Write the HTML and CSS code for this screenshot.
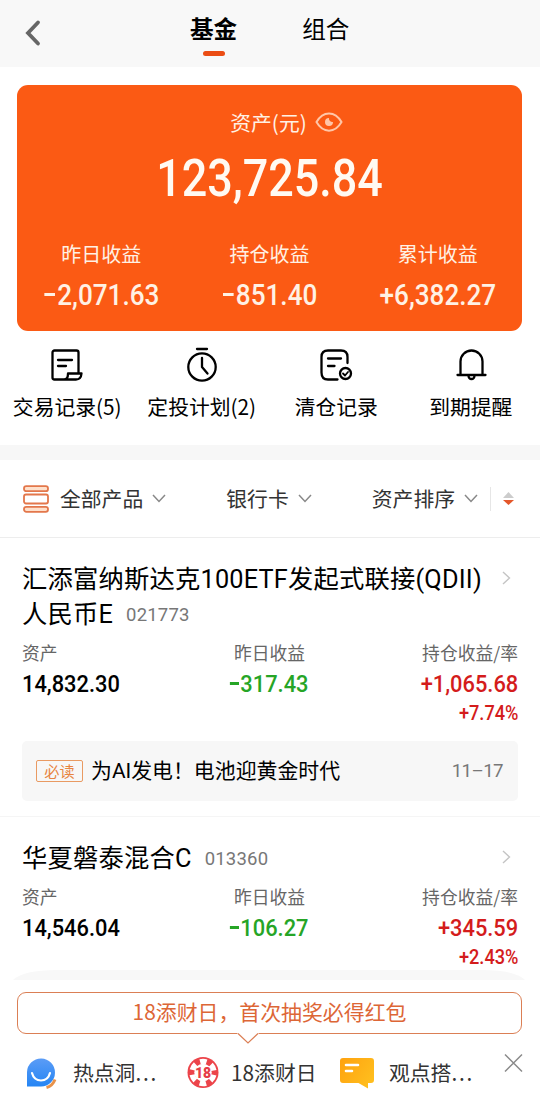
FILE: index.html
```
<!DOCTYPE html>
<html lang="zh-CN">
<head>
  <meta charset="UTF-8">
  <meta name="viewport" content="width=device-width, initial-scale=1.0">
  <title>基金</title>
  <link rel="stylesheet" href="styles.css">
</head>
<body>
  <header class="header">
    <svg class="back" width="16" height="28" viewBox="0 0 16 28"><path d="M13 3.500L3 14l10 10.500" fill="none" stroke="#666" stroke-width="3.800" stroke-linecap="round"/></svg>
    <div class="tabs">
      <div class="tab active">基金</div>
      <div class="tab">组合</div>
    </div>
  </header>

  <div class="card">
    <div class="card-title">
      <span>资产(元)</span>
      <svg width="28" height="20" viewBox="0 0 28 20" fill="none" stroke="#ffc6a8" stroke-width="2"><path d="M1.500 10C8-1.500 20-1.500 26.500 10C20 21.500 8 21.500 1.500 10z"/><path d="M14 6a4 4 0 1 0 4 4a3.500 3.500 0 0 1-4-4z" fill="#ffc6a8" stroke="none"/></svg>
    </div>
    <div class="total"><span class="num">123,725.84</span></div>
    <div class="stats">
      <div class="stat"><p>昨日收益</p><span class="num"><i class="dash"></i>2,071.63</span></div>
      <div class="stat"><p>持仓收益</p><span class="num"><i class="dash"></i>851.40</span></div>
      <div class="stat"><p>累计收益</p><span class="num">+6,382.27</span></div>
    </div>
  </div>

  <div class="actions">
    <div class="action">
      <svg width="34" height="36" viewBox="0 0 34 36"><path d="M28.500 26V5.500a2 2 0 0 0-2-2H4.500a2 2 0 0 0-2 2v25a2 2 0 0 0 2 2H26q5 0 5.500-6H18q0 6-4 6M8 13h14M8 19h8"/></svg>
      <p>交易记录(5)</p>
    </div>
    <div class="action">
      <svg width="34" height="36" viewBox="0 0 34 36"><circle cx="17" cy="20" r="13.700"/><path d="M12 2h10M17 11v9l5.500 6.500"/></svg>
      <p>定投计划(2)</p>
    </div>
    <div class="action">
      <svg width="34" height="36" viewBox="0 0 34 36"><path d="M28.500 16v-6q0-6.500-6.500-6.500H9Q2.500 3.500 2.500 10v15.500Q2.500 32.500 9 32.500h9.500M9 11.500h13M9 19h6.500"/><circle cx="26.500" cy="26.500" r="5.500"/><path d="M24 26.500l2 2 3-3.500" stroke-width="1.800"/></svg>
      <p>清仓记录</p>
    </div>
    <div class="action">
      <svg width="34" height="36" viewBox="0 0 34 36"><path d="M6.500 28V14.500a11 11 0 0 1 22 0V28M3.500 28h28M14.500 28.500v.5a3 3 0 0 0 6 0v-.5"/></svg>
      <p>到期提醒</p>
    </div>
  </div>

  <div class="filters">
    <div class="filter">
      <svg class="stack" width="26" height="28" viewBox="0 0 26 28" fill="#ffe1cc" stroke="#e3774b" stroke-width="1.800"><rect x="1" y="1.200" width="24" height="5" rx="2.300"/><rect x="1" y="9.500" width="24" height="9" rx="2" fill="#fff"/><rect x="1" y="21.800" width="24" height="5" rx="2.300"/></svg>
      <span>全部产品</span>
      <svg class="down" width="14" height="9" viewBox="0 0 14 9"><path d="M1 1l6 6.500L13 1"/></svg>
    </div>
    <div class="filter">
      <span>银行卡</span>
      <svg class="down" width="14" height="9" viewBox="0 0 14 9"><path d="M1 1l6 6.500L13 1"/></svg>
    </div>
    <div class="filter">
      <span>资产排序</span>
      <svg class="down" width="14" height="9" viewBox="0 0 14 9"><path d="M1 1l6 6.500L13 1"/></svg>
      <div class="sort">
        <svg width="11" height="14" viewBox="0 0 11 14"><path d="M5.500 0L11 6H0z" fill="#ccc"/><path d="M0 8h11l-5.500 5z" fill="#e4572a"/></svg>
      </div>
    </div>
  </div>

  <div class="fund">
    <div class="fund-head">
      <h2>汇添富纳斯达克100ETF发起式联接(QDII)<br>人民币E<span class="code">021773</span></h2>
      <svg class="go" width="9" height="14" viewBox="0 0 9 14"><path d="M1 1l6.500 6L1 13"/></svg>
    </div>
    <div class="data">
      <div><p>资产</p><span class="num">14,832.30</span></div>
      <div class="green"><p>昨日收益</p><span class="num"><i class="dash"></i>317.43</span></div>
      <div class="red"><p>持仓收益/率</p><span class="num">+1,065.68</span><span class="num rate">+7.74%</span></div>
    </div>
    <div class="news">
      <span class="tag">必读</span>
      <span class="news-title">为AI发电！电池迎黄金时代</span>
      <span class="day">11–17</span>
    </div>
  </div>

  <div class="fund second">
    <div class="fund-head">
      <h2>华夏磐泰混合C<span class="code">013360</span></h2>
      <svg class="go" width="9" height="14" viewBox="0 0 9 14"><path d="M1 1l6.500 6L1 13"/></svg>
    </div>
    <div class="data">
      <div><p>资产</p><span class="num">14,546.04</span></div>
      <div class="green"><p>昨日收益</p><span class="num"><i class="dash"></i>106.27</span></div>
      <div class="red"><p>持仓收益/率</p><span class="num">+345.59</span><span class="num rate">+2.43%</span></div>
    </div>
  </div>

  <div class="bottom">
    <svg class="curve" width="512" height="10" viewBox="0 0 512 10"><path d="M0 10Q10 0 44 0H468Q502 0 512 10z" fill="#f8f8f8"/></svg>
    <div class="tip">
      18添财日，首次抽奖必得红包
      <svg class="arrow" width="22" height="11" viewBox="0 0 22 11"><path d="M0 0h22L11 11z" fill="#fff"/><path d="M1 .5l10 9.500 10-9.500" fill="none" stroke="#db7f55" stroke-width="1.200"/></svg>
    </div>
    <div class="links">
      <div class="link">
        <svg width="32" height="34" viewBox="0 0 32 34">
          <defs><linearGradient id="blue" x1="0" y1="0" x2="0" y2="1"><stop offset="0" stop-color="#5b9cf6"/><stop offset="1" stop-color="#2585f4"/></linearGradient></defs>
          <path d="M21.500 31.500q6-1.500 8.500-8" fill="none" stroke="#e8924a" stroke-width="3"/>
          <path d="M2 30.500V16A14 14 0 1 1 16 30.500z" fill="url(#blue)"/>
          <path d="M7 17q2 7.500 9 7.500t9-7.500" fill="none" stroke="#fff" stroke-width="2.200" stroke-linecap="round"/>
        </svg>
        <span>热点洞<span class="dots">...</span></span>
      </div>
      <div class="link">
        <svg width="32" height="34" viewBox="0 0 32 34">
          <circle cx="16" cy="16.500" r="15.500" fill="#ec444a"/>
          <circle cx="16" cy="16.500" r="8.700" fill="#fff"/>
          <circle cx="16" cy="16.500" r="11" fill="none" stroke="#fff" stroke-width="5.500" stroke-dasharray="6.500 5.020" stroke-dashoffset="9.010"/>
          <text class="chip" x="16" y="21.500" text-anchor="middle">18</text>
        </svg>
        <span>18添财日</span>
      </div>
      <div class="link">
        <svg width="36" height="34" viewBox="0 0 36 34">
          <defs><linearGradient id="gold" x1="0" y1="0" x2="1" y2=".6"><stop offset="0" stop-color="#ffa20f"/><stop offset="1" stop-color="#ffbd1d"/></linearGradient></defs>
          <path d="M4 2h28a3 3 0 0 1 3 3v19a3 3 0 0 1-3 3h-3v5.500L19.500 27H4a3 3 0 0 1-3-3V5a3 3 0 0 1 3-3z" fill="url(#gold)"/>
          <path d="M7 9h12M7 15h6" stroke="#fff" stroke-width="2.600" stroke-linecap="round"/>
        </svg>
        <span>观点搭<span class="dots">...</span></span>
      </div>
      <svg class="close" width="19" height="20" viewBox="0 0 19 20"><path d="M1 1.500l17 17M18 1.500l-17 17" stroke="#8a8a8a" stroke-width="1.500"/></svg>
    </div>
  </div>
</body>
</html>
```
FILE: styles.css
```
* {
  box-sizing: border-box;
}
body {
  margin: 0px;
  height: 1103px;
  overflow: hidden;
  background-color: #fff;
  color: #000;
  font-family: "Noto Sans CJK SC", sans-serif;
  font-size: 20.8px;
}
p, h2 {
  margin: 0px;
  font-weight: 400;
}
svg {
  display: block;
  flex-shrink: 0;
}
.header {
  display: flex;
  height: 67px;
  padding-left: 25px;
  background-color: #f8f8f8;
}
.back {
  margin-top: 19px;
}
.tabs {
  display: flex;
  gap: 65px;
  margin-left: 149px;
  padding-top: 11px;
}
.tab {
  display: flex;
  flex-direction: column;
  align-items: center;
  font-size: 23.6px;
  line-height: 35px;
}
.tab.active {
  font-weight: 700;
}
.tab.active::after {
  content: "";
  width: 22px;
  height: 5px;
  margin-top: 5px;
  border-radius: 3px;
  background-color: #eb4d14;
}
/* narrow figures */
.num {
  display: inline-block;
  font-family: Roboto, sans-serif;
  font-weight: 500;
  transform: scaleX(.91);
  white-space: nowrap;
}
.dash {
  display: inline-block;
  width: .4em;
  height: .1em;
  margin-right: .08em;
  vertical-align: .3em;
  background-color: currentColor;
}
.card {
  height: 246px;
  margin: 18px 18px 0px 17px;
  padding-top: 19px;
  border-radius: 11px;
  background-color: #fb5a14;
  color: #fff1e4;
}
.card-title {
  display: flex;
  justify-content: center;
  align-items: center;
  gap: 8px;
  height: 36px;
  padding-left: 34px;
}
.total {
  height: 76px;
  color: #fffaf2;
  font-size: 52.5px;
  line-height: 67px;
  text-align: center;
}
.total .num {
  transform: scaleX(.855);
}
.stats {
  display: grid;
  grid-template-columns: repeat(3, 168.3px);
  padding-top: 18px;
}
.stat {
  text-align: center;
}
.stat p {
  font-size: 20px;
  line-height: 34px;
  margin-top: 3px;
}
.stat .num {
  margin: 0px -10px;
  font-size: 29.5px;
  line-height: 48px;
  transform: scaleX(.885);
}
.stat .dash {
  margin-left: .08em;
}
.actions {
  display: flex;
  height: 114px;
  padding-top: 16px;
}
.action {
  display: flex;
  flex-direction: column;
  align-items: center;
  width: 134.5px;
}
.action svg {
  fill: none;
  stroke: #000;
  stroke-width: 2.3;
  stroke-linecap: round;
  stroke-linejoin: round;
}
.action p {
  margin-top: 6px;
  line-height: 34px;
  white-space: nowrap;
}
.filters {
  display: flex;
  justify-content: space-between;
  align-items: center;
  height: 93px;
  padding: 0px 26px 0px 23px;
  border-top: 15px solid #f7f7f7;
  border-bottom: 1px solid #ededed;
  color: #333;
}
.filter {
  display: flex;
  align-items: center;
  gap: 9px;
}
.filter span {
  margin-top: -2px;
}
.stack {
  margin-right: 2px;
}
.down {
  fill: none;
  stroke: #888;
  stroke-width: 1.5;
}
.sort {
  display: flex;
  align-items: center;
  height: 24px;
  margin-left: 3px;
  padding-left: 12px;
  border-left: 1px solid #e6e6e6;
}
.fund {
  height: 279px;
  padding: 24px 22px 0px 22px;
  border-bottom: 1px solid #f5f5f5;
}
.fund-head {
  display: flex;
  justify-content: space-between;
}
h2 {
  font-family: Roboto, "Noto Sans CJK SC", sans-serif;
  font-size: 25.3px;
  line-height: 35px;
  letter-spacing: .2px;
  white-space: nowrap;
}
.code {
  margin-left: 13px;
  color: #777;
  font-size: 18.5px;
  line-height: 1;
  vertical-align: 2px;
}
.go {
  margin: 9px 7px 0px 0px;
  fill: none;
  stroke: #c4c4c4;
  stroke-width: 1.4;
}
.data {
  display: grid;
  grid-template-columns: 165px 165px 166px;
  height: 109px;
  padding-top: 7px;
  text-align: center;
}
.data p {
  color: #666;
  font-size: 17.8px;
  line-height: 27px;
}
.data .num {
  font-size: 24px;
  line-height: 36px;
}
.data div:first-child {
  text-align: left;
}
.data div:first-child .num {
  transform-origin: left;
}
.data .red {
  display: flex;
  flex-direction: column;
  align-items: flex-end;
}
.red .num {
  color: #d41c1c;
  transform-origin: right;
}
.data .rate {
  font-size: 20px;
  line-height: 22px;
}
.green .num {
  color: #26a526;
}
.news {
  display: flex;
  align-items: center;
  height: 60px;
  padding: 0px 15px 0px 14px;
  border-radius: 5px;
  background-color: #f7f7f7;
}
.tag {
  width: 47px;
  height: 22px;
  margin-right: 8px;
  border: 1px solid #e99a62;
  border-radius: 2px;
  color: #e78440;
  font-size: 15.2px;
  line-height: 18px;
  text-align: center;
}
.news-title {
  font-family: Roboto, "Noto Sans CJK SC", sans-serif;
  font-size: 20.9px;
  line-height: 30px;
}
.day {
  margin-left: auto;
  color: #777;
  font-family: Roboto, sans-serif;
  font-size: 18.7px;
  letter-spacing: -.6px;
}
.second {
  height: 153px;
  border-bottom: none;
}
.bottom {
  position: fixed;
  left: 0px;
  right: 0px;
  bottom: 0px;
  height: 133px;
  background-color: #fff;
}
.curve {
  margin-left: 13px;
}
.tip {
  position: relative;
  height: 42px;
  margin: 12px 18px 0px 17px;
  border: 1px solid #db7f55;
  border-radius: 9px;
  color: #dd6636;
  font-size: 20.9px;
  line-height: 37px;
  text-align: center;
}
.arrow {
  position: absolute;
  left: 219px;
  top: 40px;
}
.links {
  display: flex;
  padding: 22px 0px 0px 25px;
  color: #333;
}
.link {
  display: flex;
  gap: 16px;
  line-height: 33px;
  white-space: nowrap;
}
.link:nth-child(1) {
  width: 162px;
}
.link:nth-child(2) {
  width: 152px;
  gap: 12px;
}
.link:nth-child(3) {
  width: 165px;
  gap: 14px;
}
.dots {
  letter-spacing: 1.8px;
}
.chip {
  fill: #e63c46;
  font-family: Roboto, sans-serif;
  font-size: 14px;
  font-weight: 900;
}
.close {
  margin-top: -3px;
}
```
